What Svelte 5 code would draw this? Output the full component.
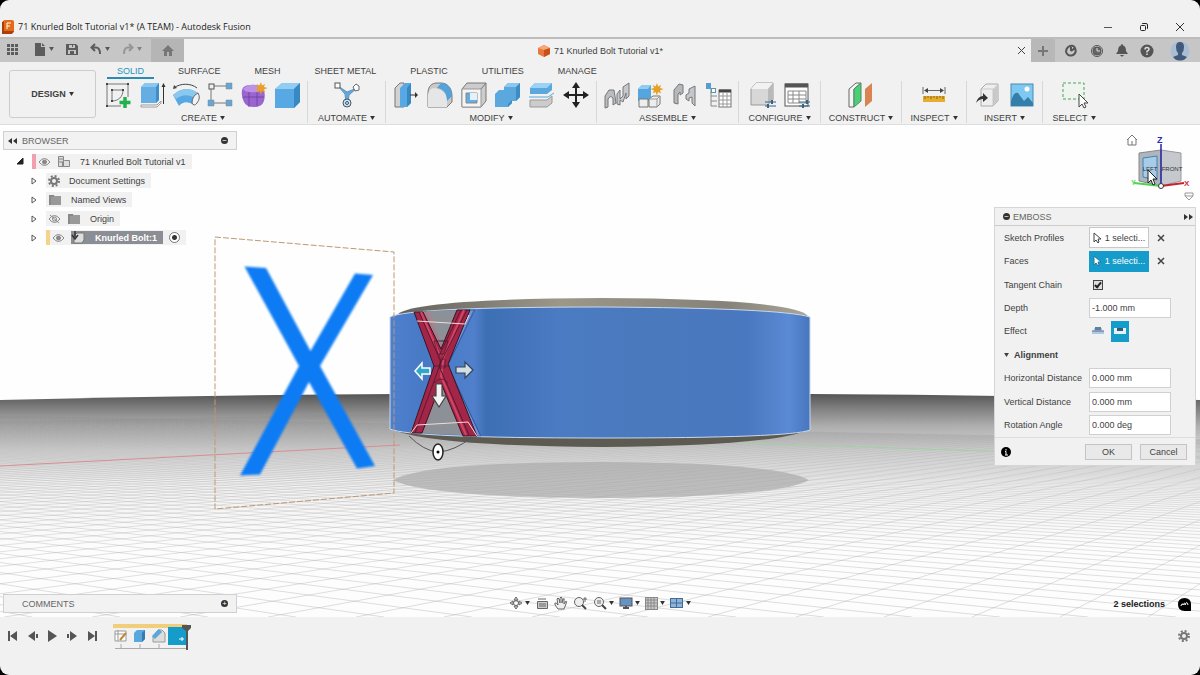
<script>
  let depth = "-1.000 mm";
  let horizontal = "0.000 mm";
  let vertical = "0.000 mm";
  let rotation = "0.000 deg";
  let tangentChain = true;
  let effect = "deboss";
  let activeTab = "SOLID";

  const tabs = ["SOLID", "SURFACE", "MESH", "SHEET METAL", "PLASTIC", "UTILITIES", "MANAGE"];

  const groups = [
    { name: "CREATE", width: 209, tools: ["sketch", "extrude", "revolve", "pattern", "form", "box"] },
    { name: "AUTOMATE", width: 78, tools: ["automate"] },
    { name: "MODIFY", width: 211, tools: ["presspull", "fillet", "shell", "combine", "split", "move"] },
    { name: "ASSEMBLE", width: 142, tools: ["joint", "component", "asbuilt", "tablejoint"] },
    { name: "CONFIGURE", width: 82, tools: ["configure", "configtable"] },
    { name: "CONSTRUCT", width: 81, tools: ["plane"] },
    { name: "INSPECT", width: 65, tools: ["measure"] },
    { name: "INSERT", width: 76, tools: ["derive", "image"] },
    { name: "SELECT", width: 62, tools: ["select"] },
  ];

  // ribbon icons, all on a 28 x 28 box
  const icons = {
    sketch: `<path d="M3 3V25H17M3 3H24V16" fill="none" stroke="#777"/><path d="M8 9V20C14 20 19 16 19 9Z" fill="none" stroke="#777"/>
      <g fill="#444"><rect x="2" y="2" width="2" height="2"/><rect x="23" y="2" width="2" height="2"/><rect x="2" y="24" width="2" height="2"/><rect x="7" y="8" width="2" height="2"/><rect x="18" y="8" width="2" height="2"/><rect x="7" y="19" width="2" height="2"/></g>
      <path d="M21 16V27M15.500 21.500H26.500" stroke="#23b14d" stroke-width="3.500"/>`,
    extrude: `<path d="M3 24H19L23 20V22L19 26H3Z" fill="#fff" stroke="#999"/><path d="M3 6L7 2H21V19L18 22H3Z" fill="#64aee4"/><path d="M3 6L7 2H21L18 6Z" fill="#8bc8f0"/><path d="M18 6L21 2V19L18 22Z" fill="#3f8ec9"/><path d="M25.500 23V4" stroke="#333"/><path d="M23.500 6L25.500 2L27.500 6Z" fill="#333"/>`,
    revolve: `<path d="M2 7C8 2 19 2 25 7" fill="none" stroke="#444"/><path d="M1 8L2 4L5 7Z" fill="#444"/><path d="M1 14Q13 3 26 12L22 24Q13 18 7 25Z" fill="#58a9e3"/><path d="M1 14Q13 3 26 12L23 17Q13 11 4 18Z" fill="#8bc8f0"/><path d="M26 12Q29 17 25 22Q22 26 20 22Q20 15 26 12Z" fill="#f2f2f2" stroke="#666"/>`,
    pattern: `<path d="M5 5H23M5 5V22M8 22H20" fill="none" stroke="#777"/><rect x="3" y="3" width="5" height="5" fill="#eee" stroke="#555"/><path d="M20 2h6v6h-6zM20 19h6v6h-6zM2 19h6v6h-6z" fill="#64a7d4" stroke="#888" stroke-width=".5"/>`,
    form: `<path d="M2 9Q3 4 11 4Q18 3 23 7Q26 12 24 20Q22 26 14 26Q6 26 4 21Q1 16 2 9Z" fill="#9b65d0"/><path d="M3 8Q8 3 14 4Q20 4 23 8Q19 12 10 11Q5 11 3 8Z" fill="#bd91e7"/><path d="M9 11V26M3 16H24M17 11V25" fill="none" stroke="#6b3d9c" stroke-width=".8"/><path d="M21 1l1 3.500 3-1.500-1 3 3.500 1-3.500 1.500 1 3-3-1.500-1 3.500-1.500-3.500-3 1.500 1.500-3-3.500-1.500 3.500-1-1.500-3 3 1.500Z" fill="#e9a02a"/>`,
    box: `<path d="M1 8L8 2H26V21L20 27H1Z" fill="#58a9e3"/><path d="M1 8L8 2H26L20 8Z" fill="#91cdf3"/><path d="M20 8L26 2V21L20 27Z" fill="#3888c2"/>`,
    automate: `<path d="M5 5L12 13L13 22L15 22L16 14L24 7L14 11Z" fill="#65a8d8" stroke="#5d96bd"/><rect x="2" y="2" width="5" height="5" fill="#fff" stroke="#555"/><path d="M20 6L23 3L26 5L26 9L22 10Z" fill="#fff" stroke="#666"/><circle cx="14" cy="22" r="4" fill="#cce4f4" stroke="#456"/><circle cx="14" cy="22" r="1.500" fill="none" stroke="#456"/>`,
    presspull: `<path d="M3 7L8 2H12V26H3Z" fill="#d2d2d2" stroke="#777"/><path d="M8 7L13 2H19V22L15 26H8Z" fill="#58a9e3"/><path d="M15 7L19 2V22L15 26Z" fill="#3888c2"/><path d="M18 14H24" stroke="#333"/><path d="M23 11L26 14L23 17Z" fill="#333"/>`,
    fillet: `<path d="M2 26V12C2 5 6 2 11 2H15C23 2 26 9 26 15V21L21 26Z" fill="#c9c9c9" stroke="#777"/><path d="M2 26V14C3 6 9 7 12 8C18 10 21 14 21 20V26Z" fill="#e6e6e6"/><path d="M11 7L15 2C22 2 26 8 26 15L21 20C21 13 18 8 11 7Z" fill="#53a2db"/>`,
    shell: `<path d="M2 8L7 2H26V20L21 26H2Z" fill="#ccc" stroke="#777"/><path d="M2 8H21V26H2Z" fill="#f5f5f5" stroke="#999"/><path d="M6 12H17V22H6Z" fill="#64aee4" stroke="#888"/><path d="M10 12H17V19H10Z" fill="#e3f1fa"/><path d="M21 8L26 2" stroke="#777"/>`,
    combine: `<path d="M1 13L5 9H10V6L14 2H26V16L22 20H18V22L14 26H1Z" fill="#5ba8df"/><path d="M10 6L14 2H26L22 6Z" fill="#8bc8f0"/><path d="M22 6L26 2V16L22 20ZM14 23L18 19V22L14 26Z" fill="#3d8cc5"/>`,
    split: `<path d="M2 7L7 2H24V9L19 13H2Z" fill="#5ba8df"/><path d="M2 7L7 2H24L19 7Z" fill="#9bd2f5"/><path d="M2 19H19L24 15V22L19 26H2Z" fill="#ccc" stroke="#999"/><path d="M1 16H20L26 12" fill="none" stroke="#55a9db"/>`,
    move: `<path d="M14 4V24M4 14H24" stroke="#222" stroke-width="2"/><path d="M14 1L18 7H10ZM14 27L18 21H10ZM1 14L7 10V18ZM27 14L21 10V18Z" fill="#222"/>`,
    joint: `<path d="M2 27V15L6 9L11 9L13 22L10 24V17Q7 14 5 18V26Z" fill="#b9bdc0" stroke="#777"/><path d="M14 23V13L17 9V18L20 15V6L26 2V15L23 18V12L20 21L17 19V24Z" fill="#c6c9cc" stroke="#777"/>`,
    component: `<path d="M1 8L5 4H14V17L11 20H1Z" fill="#55a6df"/><path d="M1 8L5 4H14L11 8Z" fill="#91cdf3"/><path d="M2 18H11V26H2ZM12 18L16 15H23V23L20 26H12Z" fill="#eee" stroke="#777"/><path d="M12 18H20L23 15M20 18V26" fill="none" stroke="#999"/><path d="M20 2l1 3.500 3-1.500-1 3 3.500 1-3.500 1.500 1 3-3-1.500-1 3.500-1.500-3.500-3 1.500 1.500-3-3.500-1.500 3.500-1-1.500-3 3 1.500Z" fill="#e5a125"/>`,
    asbuilt: `<path d="M3 22V9L8 3L12 4V12L9 14V11L7 13V23Z" fill="#b5b9bc" stroke="#777"/><path d="M24 5V25L21 22V16L18 17V20L15 18V14L18 12V8Z" fill="#c3c7c9" stroke="#777"/>`,
    tablejoint: `<path d="M2 7H6V12M6 15H12M6 20H12M6 25H12M6 11V25" fill="none" stroke="#888"/><rect x="1" y="2" width="5" height="6" fill="#559ed0"/><rect x="6.500" y="7.500" width="4" height="4" fill="#fff" stroke="#59a"/><rect x="14" y="9" width="12" height="17" fill="#fff" stroke="#777"/><path d="M14 10H26" stroke="#444" stroke-width="3"/><path d="M14 15H26M14 19H26M14 23H26M18 11V26M22 11V26" stroke="#999"/>`,
    configure: `<path d="M2 8L7 2H24V19L18 24H2Z" fill="#d7d7d7" stroke="#999"/><path d="M2 8L7 2H24L19 8Z" fill="#f2f2f2"/><path d="M19 8L24 2V20L19 24Z" fill="#bababa"/><path d="M16 21H27M16 25H27" stroke="#356587" stroke-width="1.200"/><path d="M23 19V23M19 23V27" stroke="#356587" stroke-width="2"/>`,
    configtable: `<rect x="2" y="3" width="23" height="22" fill="#fff" stroke="#555"/><path d="M2 4.500H25" stroke="#555" stroke-width="4"/><path d="M5 10H23V22H5ZM5 14H23M5 18H23M10 10V22M16 10V22" fill="none" stroke="#888"/><path d="M16 21H27M16 25H27" stroke="#356587" stroke-width="1.200"/><path d="M24 19V23M20 23V27" stroke="#356587" stroke-width="2"/>`,
    plane: `<path d="M2 8L9 2H14L7 8V26H2Z" fill="#f4f4f4" stroke="#666"/><path d="M7 8L14 2V20L7 26Z" fill="#4dce77" stroke="#4b8f61"/><path d="M18 8L25 2V20L18 26Z" fill="#d98252"/>`,
    measure: `<path d="M3 6V13M25 6V13M5 9.500H23" stroke="#666"/><path d="M4 9.500L8 7V12ZM24 9.500L20 7V12Z" fill="#444"/><rect x="3" y="15" width="22" height="6" fill="#e5ae2e"/><path d="M5 15V18M8 15V17M11 15V18M14 15V17M17 15V18M20 15V17M23 15V18" stroke="#8b6516"/>`,
    derive: `<path d="M7 8L12 3H24V20L19 25H7Z" fill="#eee" stroke="#aaa"/><path d="M19 8L24 3V20L19 25Z" fill="#c9c9c9"/><path d="M7 8H19V25" fill="none" stroke="#bbb" stroke-width=".7"/><path d="M2 22Q4 15 9 15V12L14 17L9 21V18Q5 18 2 22Z" fill="#333"/>`,
    image: `<rect x="3" y="3" width="22" height="22" fill="#7ec8f1" stroke="#488caf"/><circle cx="19" cy="8" r="2.500" fill="#fff"/><path d="M3 20Q6 10 10 12L16 20L20 16L25 22V25H3Z" fill="#347eaa"/>`,
    select: `<rect x="3" y="2" width="21" height="16" fill="#eef5ee" stroke="#48a35a" stroke-dasharray="3 2"/><path d="M19 13V26L22 23L24 27L26 26L24 22H28Z" fill="#fff" stroke="#444"/>`,
  };

  // floor grid: two families of lines running to their vanishing points
  const horizon = 392;
  const gridLines = [];
  for (let k = 1; k < 130; k++) {
    gridLines.push({ x1: 1500, x2: 1500 - k * 88 });
    gridLines.push({ x1: -1200, x2: -1200 + k * 88 });
  }
</script>

{#snippet caret()}
  <svg class="caret" viewBox="0 0 6 5" aria-hidden="true"><path d="M0 0H6L3 5Z" fill="currentColor" /></svg>
{/snippet}

{#snippet eye(off)}
  <svg width="13" height="10" viewBox="0 0 13 10" fill="none" stroke="#888" aria-hidden="true">
    <path d="M1 5Q6.500 -2 12 5Q6.500 12 1 5Z" /><circle cx="6.500" cy="5" r="2" fill={off ? "none" : "#888"} />
    {#if off}<path d="M2 1L11 9" />{/if}
  </svg>
{/snippet}

{#snippet folder()}
  <svg width="14" height="12" viewBox="0 0 14 12" aria-hidden="true"><path d="M1 1H6L7 3V11H1Z" fill="#888" /><path d="M7 2H13V11H3V3H7Z" fill="#999" /></svg>
{/snippet}

{#snippet gear(size)}
  <svg width={size} height={size} viewBox="0 0 12 12" fill="none" stroke="#777" aria-hidden="true">
    <circle cx="6" cy="6" r="3" stroke-width="2" /><circle cx="6" cy="6" r="5" stroke-width="2" stroke-dasharray="2 1.930" />
  </svg>
{/snippet}

{#snippet expander()}
  <svg width="6" height="8" viewBox="0 0 6 8" aria-hidden="true"><path d="M1 1L5 4L1 7Z" fill="#fff" stroke="#555" /></svg>
{/snippet}

<div class="app">
  <header class="titlebar">
    <svg width="12" height="14" viewBox="0 0 12 14" aria-hidden="true">
      <rect x="1" width="11" height="13" rx="2" fill="#e56b17" /><path d="M0 2L2 1V11H12L10 14H0Z" fill="#a8400d" /><path d="M5 9V3H9M5 6H8" fill="none" stroke="#fff" stroke-width="1" />
    </svg>
    <h1>71 Knurled Bolt Tutorial v1* (A TEAM) - Autodesk Fusion</h1>
    <button aria-label="Minimize"><svg width="10" height="10"><path d="M1 5.500H9" stroke="#555" /></svg></button>
    <button aria-label="Restore"><svg width="10" height="10" fill="none" stroke="#222"><rect x="1.500" y="3.500" width="5" height="5" rx="1" /><path d="M3 2Q3 1.500 4 1.500H7Q8.500 1.500 8.500 3V6Q8.500 7 8 7" /></svg></button>
    <button aria-label="Close"><svg width="10" height="10"><path d="M1 1L9 9M9 1L1 9" stroke="#333" /></svg></button>
  </header>

  <nav class="filebar">
    <div class="quick">
      <button aria-label="Data panel"><svg width="12" height="12" fill="#5c5c5c"><path d="M0 1h3v3H0zM4 1h3v3H4zM8 1h3v3H8zM0 5h3v3H0zM4 5h3v3H4zM8 5h3v3H8zM0 9h3v3H0zM4 9h3v3H4zM8 9h3v3H8z" /></svg></button>
      <button class="wide" aria-label="File"><svg width="12" height="13" fill="#5c5c5c"><path d="M1 0H7V4H11V13H1ZM8 0L11 3H8Z" /></svg>{@render caret()}</button>
      <button aria-label="Save"><svg width="12" height="12" fill="#5c5c5c" fill-rule="evenodd"><path d="M0 1H10L12 3V12H0ZM3 2V5H9V2ZM2 7V11H4V8H8V11H10V7ZM6 2H7V4H6Z" /></svg></button>
      <button class="wide" aria-label="Undo"><svg width="12" height="12" fill="none" stroke="#5c5c5c" stroke-width="2"><path d="M5 1L1.500 4.500L5 8M2 4.500H6Q10 4.500 10 11" /></svg>{@render caret()}</button>
      <button class="wide faded" aria-label="Redo"><svg width="12" height="12" fill="none" stroke="#777" stroke-width="2"><path d="M7 1L10.500 4.500L7 8M10 4.500H6Q2 4.500 2 11" /></svg>{@render caret()}</button>
    </div>
    <button class="home" aria-label="Home"><svg width="12" height="11" fill="#777"><path d="M6 0L12 6H10V11H7V7H5V11H2V6H0Z" /></svg></button>
    <div class="doc">
      <span class="doc-name">
        <svg width="12" height="12" viewBox="0 0 12 12" aria-hidden="true"><path d="M0 3L6 0L12 3V9L6 12L0 9Z" fill="#e8793c" /><path d="M0 3L6 0L12 3L6 5Z" fill="#f7a779" /><path d="M6 5L12 3V9L6 12Z" fill="#c95218" /></svg>
        71 Knurled Bolt Tutorial v1*
      </span>
      <button aria-label="Close tab"><svg width="9" height="9"><path d="M1 1L8 8M8 1L1 8" stroke="#444" /></svg></button>
    </div>
    <div class="account">
      <button class="plus" aria-label="New tab"><svg width="12" height="12"><path d="M6 1V11M1 6H11" stroke="#777" stroke-width="2" /></svg></button>
      <button aria-label="Extensions"><svg width="14" height="14" fill="none" stroke="#555" stroke-width="2"><path d="M4 3Q9 0 11 4Q13 9 9 11Q4 13 2 8Q2 5 4 3M7 7L11 4M7 3V7" /></svg></button>
      <button aria-label="Job status"><svg width="14" height="14" fill="none" stroke="#555"><circle cx="7" cy="7" r="5.500" /><circle cx="7" cy="7" r="4" fill="#666" /><path d="M7 4V7H10" stroke="#ddd" /></svg></button>
      <button aria-label="Notifications"><svg width="12" height="13" fill="#555"><path d="M6 0Q7 0 7 1.500Q10 2 10 7L12 10H0L2 7Q2 2 5 1.500Q5 0 6 0ZM4 11H8Q6 14 4 11Z" /></svg></button>
      <button aria-label="Help"><svg width="14" height="14"><circle cx="7" cy="7" r="6.500" fill="#555" /><path d="M5 5.500Q5 3.500 7 3.500Q9 3.500 9 5.300Q9 6.500 7 7.300V8.500M7 9.500V11" fill="none" stroke="#ddd" stroke-width="1.500" /></svg></button>
      <button class="avatar" aria-label="Profile"><svg width="20" height="20"><circle cx="10" cy="10" r="9.500" fill="#a9bdd3" /><path d="M10 1Q14 1 14 6Q14 10 12 12V14L17 16Q14 20 10 19.500Q6 20 3 16L8 14V12Q6 10 6 6Q6 1 10 1Z" fill="#41597a" /></svg></button>
    </div>
  </nav>

  <section class="ribbon">
    <button class="workspace">DESIGN {@render caret()}</button>
    <div class="ribbon-main">
      <div class="tabs">
        {#each tabs as tab}
          <button class:active={tab == activeTab} on:click={() => (activeTab = tab)}>{tab}</button>
        {/each}
      </div>
      <div class="groups">
        {#each groups as group}
          <div class="group" style="width: {group.width}px">
            <div class="tools">
              {#each group.tools as tool}
                <button aria-label={tool}><svg width="28" height="28" viewBox="0 0 28 28">{@html icons[tool]}</svg></button>
              {/each}
            </div>
            <button class="group-name">{group.name} {@render caret()}</button>
          </div>
        {/each}
      </div>
    </div>
  </section>

  <main class="canvas">
    <svg class="scene" viewBox="0 125 1200 492" preserveAspectRatio="xMidYMid slice" aria-hidden="true">
      <defs>
        <linearGradient id="floor" x1="0" y1="0" x2="0" y2="1">
          <stop offset="0" stop-color="#555" /><stop offset=".06" stop-color="#7d7d7d" /><stop offset=".14" stop-color="#b0b0b0" />
          <stop offset=".25" stop-color="#dadada" /><stop offset=".4" stop-color="#f1f1f1" /><stop offset=".7" stop-color="#fdfdfd" />
        </linearGradient>
        <linearGradient id="lines" gradientUnits="userSpaceOnUse" x1="0" y1="396" x2="0" y2="617">
          <stop offset="0" stop-color="#777" stop-opacity="0" /><stop offset=".15" stop-color="#888" stop-opacity=".1" /><stop offset=".4" stop-color="#999" stop-opacity=".3" /><stop offset="1" stop-color="#aaa" stop-opacity=".5" />
        </linearGradient>
        <linearGradient id="face">
          <stop offset="0" stop-color="#4d80ce" /><stop offset=".08" stop-color="#4879c5" /><stop offset=".2" stop-color="#5080cb" /><stop offset=".23" stop-color="#3d6fb5" />
          <stop offset=".4" stop-color="#4b7bc2" /><stop offset=".6" stop-color="#4a79bd" /><stop offset=".85" stop-color="#4a78c0" /><stop offset=".95" stop-color="#5b8ad4" /><stop offset="1" stop-color="#4776bf" />
        </linearGradient>
        <linearGradient id="rim"><stop offset="0" stop-color="#63625d" /><stop offset=".4" stop-color="#9b9789" /><stop offset=".8" stop-color="#858279" /><stop offset="1" stop-color="#aaa698" /></linearGradient>
        <filter id="soft"><feGaussianBlur stdDeviation="1" /></filter>
        <clipPath id="floorClip"><path d="M0 400Q200 395 400 394H810Q1000 395 1200 400V700H0Z" /></clipPath>
      </defs>
      <rect y="125" width="1200" height="492" fill="#fefefe" />
      <g clip-path="url(#floorClip)">
        <rect y="394" width="1200" height="223" fill="url(#floor)" />
        {#each gridLines as line}
          <line x1={line.x1} y1={horizon} x2={line.x2} y2="617" stroke="url(#lines)" stroke-width=".8" />
        {/each}
        <path d="M0 466L400 445" stroke="#d88d93" />
        <path d="M740 443L1200 458" stroke="#a3cfa5" />
      </g>

      <path d="M393 480Q425 462 602 462Q780 463 809 480Q780 497 602 498Q425 497 393 480Z" fill="#aaa" opacity=".7" />
      <path d="M397 315Q410 299 602 298Q795 299 808 316Z" fill="url(#rim)" />
      <path d="M396 431Q440 446 602 447Q765 446 806 431Z" fill="#5d5a52" />
      <path d="M390 317Q410 307 602 307Q780 308 810 317V430Q790 438 602 438Q410 438 390 429Z" fill="url(#face)" stroke="#c8d8ee" />

      <path d="M416 311L470 310L442 360L478 436Q440 434 410 433L436 364Z" fill="#8b9197" />
      <path d="M475 310L447 366L481 436L476 436L441 366L469 310Z" fill="#7195dc" stroke="#294d91" stroke-width=".6" />
      <path d="M425 311L446 355M474 310L448 365L480 435M432 341L452 341" fill="none" stroke="#2c4d8c" stroke-width=".6" />
      <path d="M423 312L430 312L444 350L437 365L418 432L424 432L444 380L470 435L462 435L438 380Z" fill="#ad7f8b" opacity=".8" />
      <path d="M414 312H423L441 349L457 310H470L448 364L477 436H463L441 383L422 433H411L434 366Z" fill="#a32648" stroke="#351523" />
      <path d="M421 312L440 356M464 310L444 356L441 376L466 435" fill="none" stroke="#d34562" stroke-width="2" />
      <path d="M419 312L441 362L415 433M467 310L439 366L469 435M461 310L438 358" fill="none" stroke="#5b1832" />
      <path d="M417 321L465 324L469 315M411 433L417 425L468 422L477 436" fill="none" stroke="#f3dada" />
      <path d="M434 341L448 341L444 354H438ZM434 366H450M440 362Q440 358 443 359Q446 358 445 363V368H440ZM434 383Q441 375 448 383" fill="none" stroke="#541930" stroke-width=".8" />
      <path d="M415 371L422 363V368H430V374H422V379Z" fill="#32a6ca" stroke="#fff" stroke-width="1.500" />
      <path d="M473 370L465 362V367H456V373H465V378Z" fill="#d3dde4" stroke="#31455e" stroke-width="1.200" />
      <path d="M439 407L432 396H436V384H442V396H446Z" fill="#f3f3f3" stroke="#444" stroke-width="1.200" />
      <path d="M409 436Q424 451 438 452Q455 451 472 437" fill="none" stroke="#555" />
      <ellipse cx="438" cy="452" rx="5" ry="8" fill="#fff" stroke="#222" stroke-width="1.500" /><circle cx="438" cy="452" r="1.500" />

      <path d="M244.500 266.500L266 268L310.500 351L355 273.500L373 275L320 366L375 466L357 468.500L309 382L260 474.500L240 475.500L299 366Z" fill="#0b7bf4" filter="url(#soft)" />
      <path d="M215 237L394 252V493L215 509Z" fill="none" stroke="#bd9875" stroke-dasharray="6 2" />
    </svg>

    <div class="left">
      <div class="browser">
        <div class="bar"><svg width="9" height="6"><path d="M4 0V6L0 3ZM9 0V6L5 3Z" fill="#333" /></svg><h2>BROWSER</h2><button class="dot" aria-label="Collapse browser">−</button></div>
        <ul>
          <li class="root"><svg width="7" height="7"><path d="M6 0V6H0Z" fill="#222" stroke="#222" /></svg>
            <div class="node"><i class="stripe pink"></i>{@render eye(false)}
              <svg width="14" height="13" fill="#ddd" stroke="#888"><path d="M1.500 1.500H6.500V11.500H1.500ZM2 4H6M2 7H6M7.500 5.500H12.500V11.500H5.500V7Z" /></svg><span>71 Knurled Bolt Tutorial v1</span></div></li>
          <li>{@render expander()}<div class="node">{@render gear(12)}<span>Document Settings</span></div></li>
          <li>{@render expander()}<div class="node">{@render folder()}<span>Named Views</span></div></li>
          <li>{@render expander()}<div class="node">{@render eye(true)}{@render folder()}<span>Origin</span></div></li>
          <li>{@render expander()}<div class="node bolt"><i class="stripe amber"></i>{@render eye(false)}
            <span class="picked"><svg width="15" height="13"><path d="M3 5L6 2H13V9L11 12H3Z" fill="#ddd" stroke="#777" /><path d="M4 0V6M1 4L4 8L7 4" fill="none" stroke="#333" stroke-width="1.500" /></svg>Knurled Bolt:1</span>
            <input type="radio" name="active-component" aria-label="Activate Knurled Bolt:1" checked /></div></li>
        </ul>
      </div>
      <div class="bar"><h2 class="comments">COMMENTS</h2><button class="dot" aria-label="Expand comments">+</button></div>
    </div>

    <div class="navbar">
      <button aria-label="Orbit"><svg width="14" height="14" fill="none" stroke="#666"><path d="M7 1L5 4H9ZM7 13L5 10H9ZM1 7L4 5V9ZM13 7L10 5V9Z" fill="#ddd" /><circle cx="7" cy="7" r="2.500" /></svg>{@render caret()}</button>
      <button aria-label="Look at"><svg width="14" height="14" fill="#ccc" stroke="#666"><path d="M2.500 5.500H12.500V12.500H2.500ZM3 3H11M4 8H11M4 10H11" /></svg></button>
      <button aria-label="Pan"><svg width="14" height="14"><path d="M4 13Q0 8 1 7Q2 6 4 9L3 3Q4 1 5 3L6 7V2Q7 0 8 2V7L9 3Q11 2 10 4V8L12 5Q13 5 12 8L10 13Z" fill="#eee" stroke="#666" /></svg></button>
      <button aria-label="Zoom"><svg width="15" height="14" fill="none" stroke="#666"><circle cx="6" cy="6" r="4.500" fill="#eee" /><path d="M9 9L13 13" stroke="#444" stroke-width="2" /><path d="M12 1V6M10 3H14" /></svg></button>
      <button aria-label="Fit"><svg width="14" height="14" fill="none" stroke="#666"><circle cx="6" cy="6" r="4.500" fill="#eee" /><path d="M4 5H8M4 7H8" /><path d="M9 9L13 13" stroke="#444" stroke-width="2" /></svg>{@render caret()}</button>
      <button aria-label="Display settings"><svg width="14" height="13"><rect x="1" y="1" width="12" height="8" fill="#6792c4" stroke="#555" /><path d="M4 11H10M7 9V12" stroke="#555" stroke-width="2" /></svg>{@render caret()}</button>
      <button aria-label="Grid and snaps"><svg width="13" height="13"><rect x=".5" y=".5" width="12" height="12" fill="#ccc" stroke="#888" /><path d="M3 0V13M6 0V13M9 0V13M0 3H13M0 6H13M0 9H13" stroke="#888" /></svg>{@render caret()}</button>
      <button aria-label="Viewports"><svg width="14" height="12"><rect x=".5" y="1.500" width="12" height="9" fill="#8bb3dc" stroke="#456b91" /><path d="M6.500 1V11M1 6H12" stroke="#456b91" /></svg>{@render caret()}</button>
    </div>

    <div class="right">
      <svg class="cube" width="70" height="76" viewBox="1126 131 70 76">
        <path d="M1127 140L1132 135L1137 140M1128 139V145H1136V139M1132 141V145" fill="none" stroke="#777" />
        <path d="M1139 153L1161 150V186L1139 181Z" fill="#aeb5bd" stroke="#888" /><path d="M1161 150L1181 153V181L1161 186Z" fill="#c5c9cd" stroke="#999" />
        <path d="M1143 158L1157 156V180L1143 177Z" fill="#a6cce8" stroke="#4284ae" />
        <path d="M1161 186L1134 183" stroke="#50d44c" stroke-width="2" /><path d="M1161 186L1184 183" stroke="#c52232" stroke-width="2" /><path d="M1161 186V144" stroke="#2825a8" stroke-width="1.500" />
        <g class="faces"><text x="1150" y="171">LEFT</text><text x="1172" y="171">FRONT</text></g>
        <text x="1157" y="143" font-size="9" font-weight="bold" fill="#3029c0">Z</text><text x="1184" y="186" font-size="8" font-weight="bold" fill="#d52b3e">X</text><text x="1131" y="185" font-size="7" font-weight="bold" fill="#65da60">Y</text>
        <circle cx="1161" cy="186" r="2.500" fill="#fff" stroke="#333" />
        <path d="M1148 170V183L1151 180L1153 185L1155 184L1153 179H1157Z" fill="#fff" stroke="#222" />
        <path d="M1185 193H1193V196L1189 200L1185 196ZM1185 196H1193" fill="none" stroke="#999" />
      </svg>
      <form class="emboss" on:submit|preventDefault>
        <header><span class="dot">−</span><h2>EMBOSS</h2><svg width="9" height="6"><path d="M0 0V6L4 3ZM5 0V6L9 3Z" fill="#333" /></svg></header>
        <div class="fields">
          <div class="row"><span id="profiles">Sketch Profiles</span><button type="button" class="pick" aria-describedby="profiles"><svg width="9" height="12"><path d="M1 1V10L3 8L5 11L6 10L5 7H8Z" fill="#fff" stroke="#444" /></svg>1 selecti...</button><button type="button" class="clear" aria-label="Clear sketch profiles"><svg width="8" height="8"><path d="M1 1L7 7M7 1L1 7" stroke="#444" stroke-width="1.500" /></svg></button></div>
          <div class="row"><span id="faces">Faces</span><button type="button" class="pick on" aria-describedby="faces"><svg width="9" height="12"><path d="M1 1V10L3 8L5 11L6 10L5 7H8Z" fill="#fff" stroke="#287a9d" /></svg>1 selecti...</button><button type="button" class="clear" aria-label="Clear faces"><svg width="8" height="8"><path d="M1 1L7 7M7 1L1 7" stroke="#444" stroke-width="1.500" /></svg></button></div>
          <div class="row"><label for="tangent">Tangent Chain</label><input id="tangent" type="checkbox" bind:checked={tangentChain} /></div>
          <div class="row"><label for="depth">Depth</label><input id="depth" type="text" bind:value={depth} /></div>
          <div class="row"><span>Effect</span>
            <div class="effects">
              <button type="button" class:on={effect == "emboss"} aria-label="Emboss" on:click={() => (effect = "emboss")}><svg width="14" height="10"><path d="M3 2H11V5H13V8H1V5H3Z" fill="#a8cce5" /><path d="M4 1H10V4H4Z" fill="#5d829c" /><path d="M1 5H13" stroke="#668" /></svg></button>
              <button type="button" class:on={effect == "deboss"} aria-label="Deboss" on:click={() => (effect = "deboss")}><svg width="14" height="10"><path d="M1 2H13V8H1Z" fill="#e5f2fa" /><path d="M4 2H10V5H4Z" fill="#315b77" /></svg></button>
            </div></div>
          <button type="button" class="section">{@render caret()} Alignment</button>
          <div class="row"><label for="hdist">Horizontal Distance</label><input id="hdist" type="text" bind:value={horizontal} /></div>
          <div class="row"><label for="vdist">Vertical Distance</label><input id="vdist" type="text" bind:value={vertical} /></div>
          <div class="row"><label for="angle">Rotation Angle</label><input id="angle" type="text" bind:value={rotation} /></div>
        </div>
        <footer><svg class="info" width="10" height="10"><circle cx="5" cy="5" r="5" /><path d="M5 2V3.500M4 4.500H5V8M4 8H7" fill="none" stroke="#fff" /></svg><button>OK</button><button type="button">Cancel</button></footer>
      </form>
      <div class="status">2 selections
        <svg width="13" height="13"><path d="M6.500 0Q13 0 13 6.500V13H6.500Q0 13 0 6.500Q0 0 6.500 0Z" /><path d="M3 8Q4 4 5 7Q7 3 7 7Q9 2 10 7" fill="none" stroke="#fff" /></svg></div>
    </div>
  </main>

  <footer class="timeline">
    <div class="play">
      <button aria-label="Go to start"><svg width="12" height="12" fill="#555"><path d="M1 1H3V11H1ZM10 1V11L3 6Z" /></svg></button>
      <button aria-label="Step back"><svg width="12" height="12" fill="#555"><path d="M8 1V11L1 6ZM9 4H11V8H9Z" /></svg></button>
      <button aria-label="Play"><svg width="12" height="12" fill="#555"><path d="M1 0L10 6L1 12Z" /></svg></button>
      <button aria-label="Step forward"><svg width="12" height="12" fill="#555"><path d="M3 1V11L10 6ZM0 4H2V8H0Z" /></svg></button>
      <button aria-label="Go to end"><svg width="12" height="12" fill="#555"><path d="M8 1H10V11H8ZM1 1V11L8 6Z" /></svg></button>
    </div>
    <div class="history">
      <svg width="78" height="27" viewBox="0 0 78 27">
        <rect width="74" height="4" fill="#f1ce7c" /><path d="M2 24.500H74M8 20V24M27 20V24M46 20V24" stroke="#aaa" />
        <path d="M2 7H13V17H2ZM5 6V17M2 10H13" fill="#fff" stroke="#999" /><path d="M7 16L13 9" stroke="#bd8a38" stroke-width="2" />
        <path d="M21 9L24 6H32V15L29 18H21Z" fill="#58a7df" /><path d="M29 9L32 6V15L29 18Z" fill="#367ba9" />
        <path d="M40 12L45 6H49L52 9V18H40Z" fill="#ddd" stroke="#999" /><path d="M39 12L46 5L49 8L42 15Z" fill="#5da6d7" />
        <rect x="55" y="3" width="18" height="18" fill="#159ccb" /><path d="M66 15H71M69 13V17" stroke="#fff" />
        <path d="M69 1H78V4L75 7V26H73V7L69 4Z" fill="#555" />
      </svg>
    </div>
    <button class="settings" aria-label="Timeline settings">{@render gear(12)}</button>
  </footer>
</div>

<style>
  :global(body) {
    margin: 0;
    background: #000;
  }
  .app {
    display: flex;
    flex-direction: column;
    min-height: 100vh;
    border-radius: 9px;
    overflow: hidden;
    background: #f1f1f1;
    color: #3f3f3f;
    font: 9px/12px "Liberation Sans", Arial, sans-serif;
  }
  button,
  input {
    font: inherit;
    color: inherit;
    box-sizing: border-box;
  }
  button {
    display: flex;
    align-items: center;
    justify-content: center;
    gap: 3px;
    padding: 0;
    border: 0;
    background: none;
  }
  svg {
    flex: none;
    display: block;
  }
  h1,
  h2 {
    margin: 0;
    font-size: inherit;
    font-weight: 400;
  }
  .caret {
    width: 5px;
    height: 4px;
  }

  .titlebar {
    display: flex;
    align-items: center;
    height: 20px;
    padding: 17px 2px 0;
    border-bottom: 2px solid #bcbcbc;
  }
  .titlebar h1 {
    flex: 1;
    margin-left: 4px;
    color: #222;
    font: 9px/14px "Open Sans", "Noto Sans", sans-serif;
  }
  .titlebar button {
    width: 36px;
    height: 20px;
  }

  .filebar {
    display: flex;
    height: 23px;
    background: #c6c6c6;
  }
  .quick {
    display: flex;
    align-items: center;
    gap: 12px;
    padding: 0 9px 3px 7px;
    color: #555;
  }
  .quick .wide {
    width: 20px;
  }
  .quick button:first-child {
    margin-right: 3px;
  }
  .faded {
    opacity: 0.6;
  }
  .home {
    width: 33px;
    background: #b5b5b5;
  }
  .doc {
    flex: 1;
    display: flex;
    align-items: center;
    padding-right: 5px;
    background: #f1f1f1;
  }
  .doc-name {
    flex: 1;
    display: flex;
    align-items: center;
    justify-content: center;
    gap: 4px;
    font-size: 9px;
  }
  .account {
    display: flex;
    align-items: center;
    gap: 12px;
    padding-right: 10px;
  }
  .account .plus {
    width: 24px;
    height: 23px;
    margin-right: -3px;
    background: #b8b8b8;
  }
  .avatar {
    margin-left: 4px;
  }

  .ribbon {
    display: flex;
    align-items: flex-start;
    gap: 3px;
    height: 62px;
    border-bottom: 1px solid #ddd;
  }
  .workspace {
    width: 87px;
    height: 48px;
    margin: 8px 0 0 9px;
    border: 1px solid #ccc;
    border-radius: 3px;
    font-weight: 700;
  }
  .workspace .caret,
  .group-name .caret {
    color: #333;
  }
  .tabs {
    display: flex;
    gap: 14px;
    margin-left: 8px;
  }
  .tabs button {
    height: 17px;
    padding: 2px 10px 0;
    border-bottom: 2px solid transparent;
  }
  .tabs .active {
    color: #2594be;
    border-color: #2a8cb0;
  }
  .groups {
    display: flex;
    margin-top: 2px;
  }
  .group {
    box-sizing: border-box;
    height: 42px;
    border-right: 1px solid #d8d8d8;
  }
  .group:last-child {
    border: 0;
  }
  .tools {
    display: flex;
    justify-content: center;
    gap: 6px;
  }
  .group-name {
    width: 100%;
    height: 16px;
    padding-top: 1px;
  }

  .canvas {
    position: relative;
    flex: 1;
    display: grid;
    grid-template-columns: 234px 1fr 234px;
    padding: 6px 4px 4px 3px;
    background: #fff;
  }
  .scene {
    position: absolute;
    inset: 0;
    width: 100%;
    height: 100%;
  }
  .left,
  .right {
    position: relative;
    display: flex;
    flex-direction: column;
    justify-content: space-between;
  }
  .bar {
    display: flex;
    align-items: center;
    gap: 5px;
    box-sizing: border-box;
    height: 19px;
    padding: 0 8px 0 4px;
    border: 1px solid #d0d0d0;
    background: #f2f2f2;
  }
  .bar h2 {
    flex: 1;
    color: #666;
  }
  .bar .comments {
    margin-left: 14px;
  }
  .dot {
    display: flex;
    align-items: center;
    justify-content: center;
    width: 7px;
    height: 7px;
    border-radius: 50%;
    background: #333;
    color: #fff;
    font-size: 8px;
    line-height: 7px;
  }
  ul {
    margin: 2px 0 0;
    padding: 0 0 0 28px;
    list-style: none;
  }
  li {
    display: flex;
    align-items: center;
    gap: 9px;
    height: 19px;
  }
  .root {
    gap: 8px;
    margin-left: -14px;
  }
  .node {
    display: flex;
    align-items: center;
    gap: 6px;
    height: 15px;
    padding: 0 6px 0 2px;
    background: #f1f1f1;
  }
  .node > span {
    margin-left: 3px;
  }
  .root .node,
  .bolt {
    padding-left: 0;
  }
  .stripe {
    width: 4px;
    height: 15px;
    margin-right: -4px;
  }
  .pink {
    background: #f2a0ae;
  }
  .amber {
    background: #f4d48b;
  }
  .node .picked {
    display: flex;
    align-items: center;
    gap: 9px;
    height: 13px;
    margin-left: 0;
    padding-right: 6px;
    background: #8b8e94;
    color: #fff;
    font-weight: 700;
  }
  input[type="radio"] {
    appearance: none;
    width: 11px;
    height: 11px;
    margin: 0;
    border: 1px solid #777;
    border-radius: 50%;
    background: radial-gradient(circle, #333 0 2px, #fff 3px);
  }

  .navbar {
    position: relative;
    align-self: end;
    justify-self: center;
    display: flex;
    align-items: center;
    gap: 5px;
    height: 20px;
    color: #333;
  }
  .navbar button {
    gap: 2px;
  }

  .right {
    align-items: flex-end;
  }
  .faces {
    font: 6px "Liberation Sans Narrow", "Liberation Sans", sans-serif;
    fill: #333;
    text-anchor: middle;
  }
  .emboss {
    width: 202px;
    box-sizing: border-box;
    margin-bottom: auto;
    border: 1px solid #d6d6d6;
    background: #f1f1f1;
  }
  .emboss header {
    display: flex;
    align-items: center;
    gap: 3px;
    height: 17px;
    padding: 0 2px 0 8px;
    border-bottom: 1px solid #ccc;
  }
  .emboss h2 {
    flex: 1;
    color: #666;
  }
  .fields {
    display: grid;
    grid-template-rows: repeat(9, 1fr);
    height: 211px;
    padding-left: 9px;
  }
  .row {
    display: grid;
    grid-template-columns: 81px 60px 22px;
    align-items: center;
    column-gap: 4px;
  }
  input[type="text"] {
    grid-column: 2 / 4;
    width: 82px;
    height: 20px;
    padding: 0 2px;
    border: 1px solid #d0d0d0;
    background: #fff;
  }
  input[type="checkbox"] {
    appearance: none;
    display: grid;
    place-items: center;
    width: 10px;
    height: 10px;
    margin: 0 0 0 4px;
    border: 1px solid #444;
    background: #ddd;
  }
  input[type="checkbox"]:checked::after {
    content: "";
    width: 2px;
    height: 5px;
    border: solid #222;
    border-width: 0 2px 2px 0;
    transform: rotate(40deg);
  }
  .pick {
    height: 21px;
    border: 1px solid #c8c8c8;
    background: #fff;
  }
  .pick.on,
  .effects .on {
    border-color: #159ccb;
    background: #159ccb;
    color: #fff;
  }
  .clear {
    width: 16px;
    height: 16px;
  }
  .effects {
    display: flex;
    gap: 4px;
  }
  .effects button {
    width: 18px;
    height: 21px;
  }
  .section {
    justify-content: flex-start;
    gap: 5px;
    font-weight: 700;
  }
  .emboss footer {
    display: flex;
    align-items: center;
    gap: 8px;
    height: 27px;
    padding: 0 8px 0 6px;
    border-top: 1px solid #ddd;
  }
  .info {
    margin-right: auto;
  }
  .emboss footer button {
    width: 47px;
    height: 16px;
    border: 1px solid #c4c4c4;
    background: #e9e9e9;
  }
  .status {
    display: flex;
    align-items: center;
    gap: 13px;
    height: 18px;
    padding-right: 5px;
    color: #222;
    font-weight: 700;
  }

  .timeline {
    display: flex;
    align-items: flex-start;
    height: 51px;
    padding: 7px 10px 0 7px;
  }
  .play {
    display: flex;
    gap: 8px;
    margin: 6px 14px 0 0;
  }
  .settings {
    margin: 6px 0 0 auto;
  }
</style>
